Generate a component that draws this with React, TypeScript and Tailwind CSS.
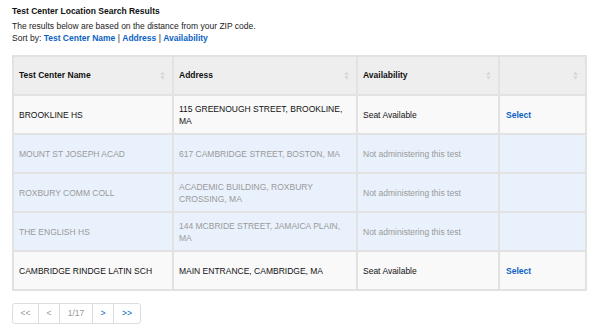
import React from 'react';

type Row = {
  name: string;
  address: string;
  available: boolean;
};

const rows: Row[] = [
  { name: 'BROOKLINE HS', address: '115 GREENOUGH STREET, BROOKLINE, MA', available: true },
  { name: 'MOUNT ST JOSEPH ACAD', address: '617 CAMBRIDGE STREET, BOSTON, MA', available: false },
  { name: 'ROXBURY COMM COLL', address: 'ACADEMIC BUILDING, ROXBURY CROSSING, MA', available: false },
  { name: 'THE ENGLISH HS', address: '144 MCBRIDE STREET, JAMAICA PLAIN, MA', available: false },
  { name: 'CAMBRIDGE RINDGE LATIN SCH', address: 'MAIN ENTRANCE, CAMBRIDGE, MA', available: true },
];

const SortIcon = () => (
  <svg width="5" height="9" viewBox="0 0 5 9" className="shrink-0">
    <path d="M2.5 0.5 L4.8 3.8 L0.2 3.8 Z" fill="#d6d6d6" />
    <path d="M2.5 8.5 L4.8 5.2 L0.2 5.2 Z" fill="#d6d6d6" />
  </svg>
);

const HeaderCell = ({ label, last }: { label: string; last?: boolean }) => (
  <th
    className={
      'h-[39px] px-[5px] text-left align-middle font-bold text-[8.5px] text-[#111] bg-[#eeeeee] border-b-2 border-[#e2e2e2] ' +
      (last ? '' : 'border-r-2')
    }
  >
    <div className="flex items-center justify-between pr-[2px]">
      <span>{label}</span>
      <SortIcon />
    </div>
  </th>
);

const App = () => {
  return (
    <div
      className="w-[600px] h-[332px] bg-white pl-[12px] pt-[5px]"
      style={{ fontFamily: '"Liberation Sans", Arial, sans-serif' }}
    >
      <div className="text-[8.5px] font-bold text-[#111] leading-[12px]">
        Test Center Location Search Results
      </div>
      <div className="mt-[3px] text-[8.5px] text-[#222] leading-[12px]">
        The results below are based on the distance from your ZIP code.
      </div>
      <div className="text-[8.5px] text-[#222] leading-[12px]">
        Sort by: <span className="font-bold text-[#0a63c4]">Test Center Name</span> |{' '}
        <span className="font-bold text-[#0a63c4]">Address</span> |{' '}
        <span className="font-bold text-[#0a63c4]">Availability</span>
      </div>

      <table className="mt-[11px] w-[573px] table-fixed border-collapse border-2 border-[#e2e2e2]">
        <colgroup>
          <col className="w-[160px]" />
          <col className="w-[184px]" />
          <col className="w-[142px]" />
          <col className="w-[87px]" />
        </colgroup>
        <thead>
          <tr>
            <HeaderCell label="Test Center Name" />
            <HeaderCell label="Address" />
            <HeaderCell label="Availability" />
            <HeaderCell label="" last />
          </tr>
        </thead>
        <tbody>
          {rows.map((row, idx) => {
            const bg = row.available ? 'bg-[#f9f9f9]' : 'bg-[#e9f1fc]';
            const color = row.available ? 'text-[#111]' : 'text-[#9a9a9a]';
            return (
              <tr key={idx} className={bg}>
                <td className={`h-[39px] px-[5px] text-[8.5px] leading-[12px] align-middle border-r-2 border-b-2 border-[#e2e2e2] ${color}`}>
                  {row.name}
                </td>
                <td className={`px-[5px] text-[8.5px] leading-[12px] align-middle border-r-2 border-b-2 border-[#e2e2e2] ${color}`}>
                  {row.address}
                </td>
                <td className={`px-[5px] text-[8.5px] leading-[12px] align-middle border-r-2 border-b-2 border-[#e2e2e2] ${color}`}>
                  {row.available ? 'Seat Available' : 'Not administering this test'}
                </td>
                <td className="px-[6px] text-[8.5px] leading-[12px] align-middle border-b-2 border-[#e2e2e2]">
                  {row.available && <span className="font-bold text-[#0a63c4]">Select</span>}
                </td>
              </tr>
            );
          })}
        </tbody>
      </table>

      <div className="mt-[12px] flex w-fit h-[21px] rounded-[3px] border border-[#dddddd] text-[8.5px]">
        <div className="w-[26px] flex items-center justify-center text-[#999] border-r border-[#dddddd]">&lt;&lt;</div>
        <div className="w-[21px] flex items-center justify-center text-[#999] border-r border-[#dddddd]">&lt;</div>
        <div className="w-[33px] flex items-center justify-center text-[#999] border-r border-[#dddddd]">1/17</div>
        <div className="w-[21px] flex items-center justify-center text-[#0a63c4] border-r border-[#dddddd]">&gt;</div>
        <div className="w-[26px] flex items-center justify-center text-[#0a63c4]">&gt;&gt;</div>
      </div>
    </div>
  );
};

export default App;
